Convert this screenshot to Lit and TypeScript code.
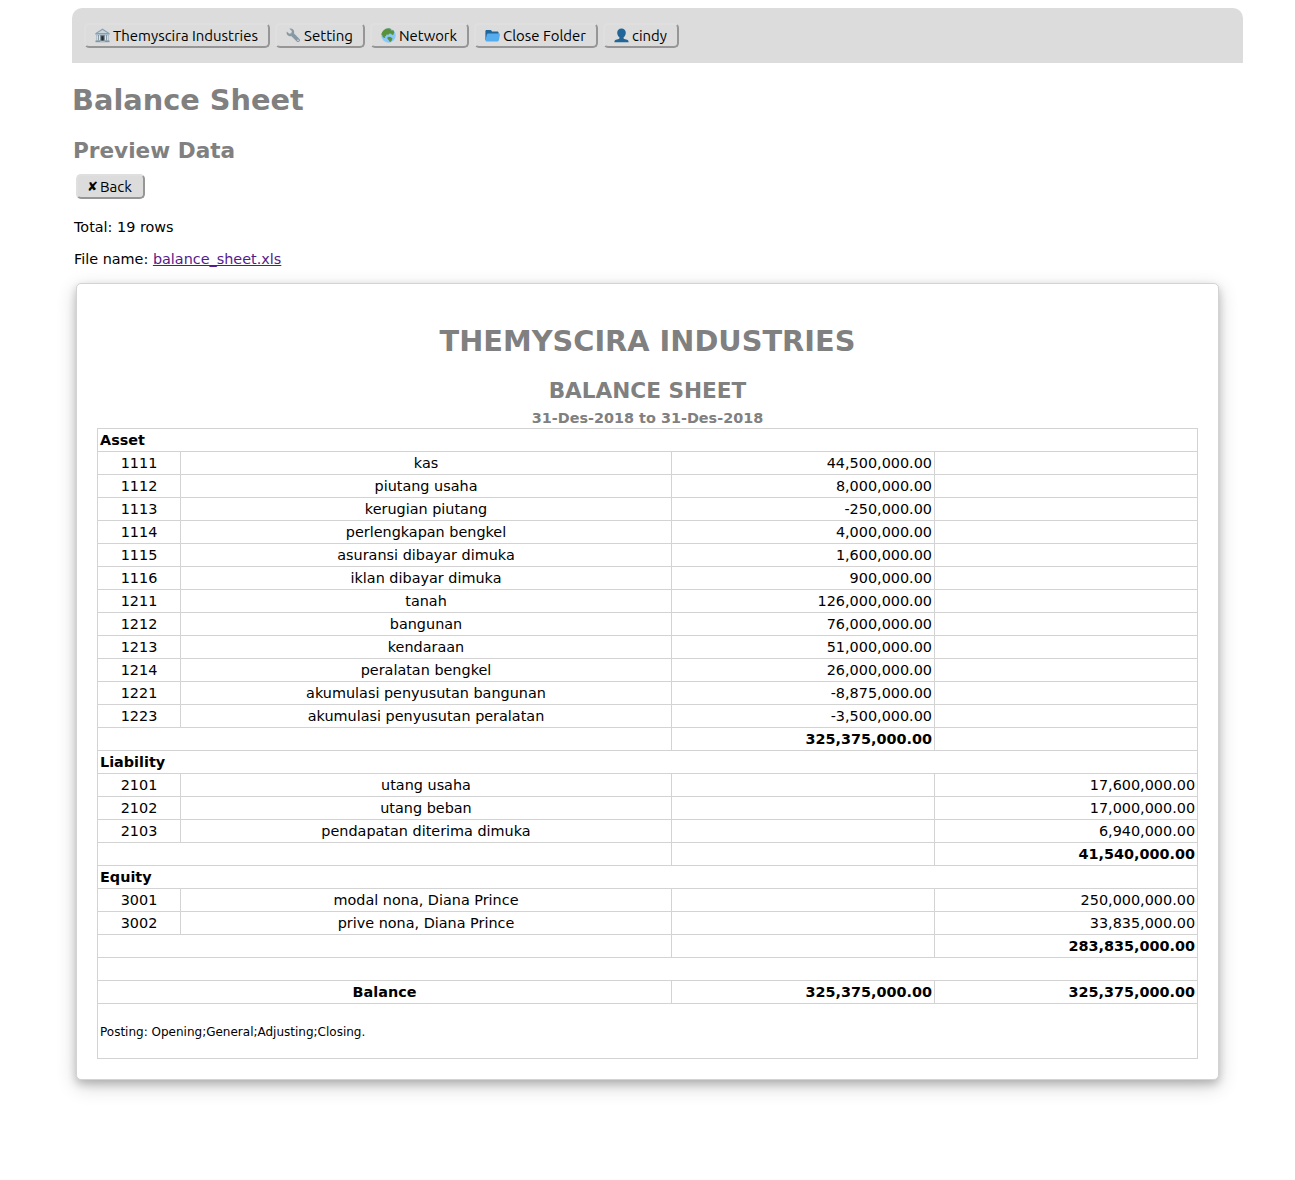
import { LitElement, html, css, svg, nothing } from "lit";
import { customElement, property } from "lit/decorators.js";

type Side = "debit" | "credit";
interface Account { code: string; name: string; amount: string; }
interface Section { title: string; side: Side; accounts: Account[]; total: string; }

const acc = (code: string, name: string, amount: string): Account => ({ code, name, amount });

const SECTIONS: Section[] = [
  {
    title: "Asset", side: "debit", total: "325,375,000.00",
    accounts: [
      acc("1111", "kas", "44,500,000.00"),
      acc("1112", "piutang usaha", "8,000,000.00"),
      acc("1113", "kerugian piutang", "-250,000.00"),
      acc("1114", "perlengkapan bengkel", "4,000,000.00"),
      acc("1115", "asuransi dibayar dimuka", "1,600,000.00"),
      acc("1116", "iklan dibayar dimuka", "900,000.00"),
      acc("1211", "tanah", "126,000,000.00"),
      acc("1212", "bangunan", "76,000,000.00"),
      acc("1213", "kendaraan", "51,000,000.00"),
      acc("1214", "peralatan bengkel", "26,000,000.00"),
      acc("1221", "akumulasi penyusutan bangunan", "-8,875,000.00"),
      acc("1223", "akumulasi penyusutan peralatan", "-3,500,000.00"),
    ],
  },
  {
    title: "Liability", side: "credit", total: "41,540,000.00",
    accounts: [
      acc("2101", "utang usaha", "17,600,000.00"),
      acc("2102", "utang beban", "17,000,000.00"),
      acc("2103", "pendapatan diterima dimuka", "6,940,000.00"),
    ],
  },
  {
    title: "Equity", side: "credit", total: "283,835,000.00",
    accounts: [
      acc("3001", "modal nona, Diana Prince", "250,000,000.00"),
      acc("3002", "prive nona, Diana Prince", "33,835,000.00"),
    ],
  },
];

const ICONS: Record<string, unknown> = {
  bank: svg`
    <path d="M0.300 5.200 7.500 0.600l7.200 4.600v1.300H.3z" fill="#8aa0ae"/>
    <path d="M2.600 5 7.500 1.900 12.400 5z" fill="#c6d6df"/>
    <path d="M.8 6h13.400v1H.8z" fill="#a9bcc8"/>
    <path d="M1.300 7h12.400v5.600H1.300z" fill="#7d93a2"/>
    <path d="M1.600 7.200h1.300v5.200H1.600zM3.900 7.200h1.300v5.200H3.900zM9.800 7.200h1.300v5.200H9.800zM12.100 7.200h1.300v5.200h-1.300z" fill="#dbe6ec"/>
    <path d="M5.600 7.400h3.800v5.800H5.600z" fill="#6c6f70"/>
    <path d="M6.400 8.200h2.200v4.600H6.400z" fill="#23282c"/>
    <path d="M.5 12.500h14v1.700H.5z" fill="#7f96a6"/>
    <path d="M5.200 13h4.600v1.200H5.200z" fill="#c9b8a4"/>`,
  wrench: svg`
    <path d="M3.400.7 5.900 3.100 5.300 5.200 3.200 5.800.8 3.400C.2 5.200.8 6.600 2 7.500c1 .7 2.200.8 3.200.4l5.500 5.500c.7.8 1.900.9 2.700.2.8-.8.800-2 .1-2.700L7.900 5.300C8.400 4 8.200 2.800 7.300 1.800 6.300.7 4.900.3 3.400.7z" fill="#8899a6"/>
    <circle cx="12" cy="12.200" r=".8" fill="#dcdcdc"/>`,
  globe: svg`
    <circle cx="7.500" cy="7.500" r="7.200" fill="#88c9f9"/>
    <path d="M2.200 2.800C3.800 1 6 .200 8 .300l2 .600-.5 1.200 1.300.300 1.500-.200 1 1.800-.8 2.600-1.400.4-1-1.300-1.600-.200-1.200 1.300-1.700-.200-.6 1.400-1.200.5.400 1.200-1.200.2-1.500-1.500L1.400 7.200.4 6.800C.5 5.400 1.200 3.900 2.200 2.800z" fill="#5c913b"/>
    <path d="M6.800 8.700l2.800.2 1.900 1.500-.7 2-1.800 1.800-1.400-2.200-1.300-1.500z" fill="#5c913b"/>`,
  folder: svg`
    <path d="M.4 12V3.300c0-.9.500-1.400 1.400-1.400h3.400c.8 0 1.100.3 1.500 1l.4.700h5.200c.8 0 1.300.5 1.300 1.300V12z" fill="#226699"/>
    <path d="M3.400 5.600h10.400c.8 0 1.200.5 1.100 1.200l-1 5.300c-.2.900-.7 1.300-1.500 1.300H1.500c-.8 0-1.200-.5-1-1.300l1.300-5.300c.2-.8.800-1.200 1.600-1.200z" fill="#55acee"/>`,
  user: svg`
    <path d="M7.500.6c2.500 0 4.300 1.600 4.300 4.200 0 1.800-.8 3.500-2.200 4.500v1c.2.700 1.200.9 2.500 1.200 1.700.4 2.500 1 2.500 2.700H.4c0-1.700.8-2.300 2.500-2.700 1.300-.3 2.300-.5 2.500-1.200v-1C4 8.300 3.200 6.600 3.200 4.800 3.200 2.200 5 .6 7.500.6z" fill="#226699"/>`,
};

@customElement("raised-button")
export class RaisedButton extends LitElement {
  @property() icon = "";
  @property() label = "";
  @property({ type: Number }) width = 80;

  static styles = css`
    :host { display: block; }
    .button {
      box-sizing: border-box;
      display: flex;
      align-items: center;
      height: 25px;
      margin: 0;
      padding: 0 0 0 9px;
      border: 2px solid;
      border-color: #dfdfdf #969696 #969696 #dfdfdf;
      border-radius: 5px;
      background: #dcdcdc;
      color: #000;
      font: 14.3px/20px Ubuntu, "Noto Sans", sans-serif;
      white-space: nowrap;
    }
    .icon { width: 15px; height: 15px; margin-right: 3px; flex: none; }
    .cross { font: 13px/20px "DejaVu Sans", sans-serif; width: 12px; margin-right: 2px; }
    .label { display: block; height: 20px; flex: 1; overflow: visible; }
  `;

  render() {
    const lead = this.icon ? 18 : 14;
    return html`<button class="button" style="width:${this.width}px">
      ${this.icon
        ? html`<svg class="icon" viewBox="0 0 15 15">${ICONS[this.icon]}</svg>`
        : html`<span class="cross">✘</span>`}
      <svg class="label"><text x="0" y="15" textLength=${this.width - lead - 23} lengthAdjust="spacingAndGlyphs">${this.label}</text></svg>
    </button>`;
  }
}

@customElement("app-root")
export class AppRoot extends LitElement {
  static styles = css`
    :host {
      display: block;
      min-height: 1180px;
      box-sizing: border-box;
      padding: 8px 52px 0 72px;
      background: #fff;
      color: #000;
      font: 14.4px/17px "DejaVu Sans", sans-serif;
    }
    .menu {
      display: flex;
      gap: 5px;
      box-sizing: border-box;
      height: 55px;
      padding: 15px 12px;
      border-radius: 10px 10px 0 0;
      background: #dcdcdc;
    }
    h1, h2, h3, p { margin: 0; }
    h1, h2, h3 { color: #808080; font-weight: bold; }
    h1 { font-size: 28.8px; line-height: 34px; }
    h2 { font-size: 21.6px; line-height: 26px; }
    h3 { font-size: 14.4px; line-height: 17px; }
    .title { margin-top: 20px; }
    .subtitle { margin: 21px 0 0 1px; }
    .back { margin: 10px 0 0 4px; }
    .info { margin: 20px 0 0 2px; }
    .file { margin: 15px 0 0 2px; }
    a { color: #551a8b; text-decoration: underline; }
    .card {
      box-sizing: border-box;
      width: 1143px;
      height: 797px;
      margin: 15px 0 0 4px;
      padding: 40px 20px 0;
      border: 1px solid #d3d3d3;
      border-radius: 5px;
      background: #fff;
      box-shadow: 0 4px 8px 0 rgba(0, 0, 0, 0.2), 0 6px 20px 0 rgba(0, 0, 0, 0.19);
      text-align: center;
    }
    .report { margin-top: 20px; }
    .period { margin-top: 6px; }
    table {
      width: 1101px;
      margin-top: 1px;
      border-collapse: collapse;
      table-layout: fixed;
    }
    .code { width: 83px; }
    .name { width: 491px; }
    .money { width: 263px; }
    tr { height: 23px; }
    td {
      box-sizing: border-box;
      border: 1px solid #d3d3d3;
      padding: 0 2px;
      text-align: center;
    }
    .left { text-align: left; }
    .right { text-align: right; }
    .bold { font-weight: bold; }
    .note { height: 55px; padding-top: 2px; font-size: 12px; text-align: left; }
  `;

  private amounts(side: Side, value: string, bold = false) {
    const cls = bold ? "right bold" : "right";
    return html`<td class=${cls}>${side === "debit" ? value : nothing}</td>
      <td class=${cls}>${side === "credit" ? value : nothing}</td>`;
  }

  private section(s: Section) {
    return html`
      <tr><td class="left bold" colspan="4">${s.title}</td></tr>
      ${s.accounts.map((a) => html`<tr>
        <td>${a.code}</td><td>${a.name}</td>${this.amounts(s.side, a.amount)}
      </tr>`)}
      <tr><td colspan="2"></td>${this.amounts(s.side, s.total, true)}</tr>`;
  }

  render() {
    return html`
      <nav class="menu">
        <raised-button icon="bank" label="Themyscira Industries" width="186"></raised-button>
        <raised-button icon="wrench" label="Setting" width="90"></raised-button>
        <raised-button icon="globe" label="Network" width="99"></raised-button>
        <raised-button icon="folder" label="Close Folder" width="124"></raised-button>
        <raised-button icon="user" label="cindy" width="76"></raised-button>
      </nav>
      <h1 class="title">Balance Sheet</h1>
      <h2 class="subtitle">Preview Data</h2>
      <raised-button class="back" label="Back" width="69"></raised-button>
      <p class="info">Total: 19 rows</p>
      <p class="file">File name: <a href="#">balance_sheet.xls</a></p>
      <section class="card">
        <h1>THEMYSCIRA INDUSTRIES</h1>
        <h2 class="report">BALANCE SHEET</h2>
        <h3 class="period">31-Des-2018 to 31-Des-2018</h3>
        <table>
          <colgroup><col class="code"><col class="name"><col class="money"><col class="money"></colgroup>
          <tbody>
            ${SECTIONS.map((s) => this.section(s))}
            <tr><td colspan="4"></td></tr>
            <tr>
              <td class="bold" colspan="2">Balance</td>
              <td class="right bold">325,375,000.00</td>
              <td class="right bold">325,375,000.00</td>
            </tr>
            <tr><td class="note" colspan="4">Posting: Opening;General;Adjusting;Closing.</td></tr>
          </tbody>
        </table>
      </section>`;
  }
}
